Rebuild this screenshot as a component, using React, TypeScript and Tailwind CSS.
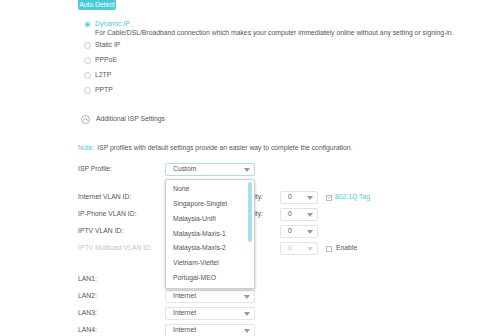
import { useState } from "react";

const TEAL = "#4acbd6";

const ISP_PROFILES = [
  "None",
  "Singapore-Singtel",
  "Malaysia-Unifi",
  "Malaysia-Maxis-1",
  "Malaysia-Maxis-2",
  "Vietnam-Viettel",
  "Portugal-MEO",
];

const CONNECTION_TYPES = ["Static IP", "PPPoE", "L2TP", "PPTP"];

function Arrow({ muted }: { muted?: boolean }) {
  return (
    <svg width="6" height="4" viewBox="0 0 6 4" className="shrink-0">
      <path d="M0 0 L6 0 L3 4 Z" fill={muted ? "#d6d6d6" : "#9a9a9a"} />
    </svg>
  );
}

function Select({
  value,
  wide,
  focused,
  muted,
}: {
  value: string;
  wide?: boolean;
  focused?: boolean;
  muted?: boolean;
}) {
  return (
    <div
      className={`flex h-[13px] items-center justify-between rounded-[2px] border bg-white pl-[7px] pr-[4px] ${
        wide ? "w-[90px]" : "w-[38px]"
      } ${focused ? "border-[#a6e3e8]" : "border-[#e3e3e3]"} ${
        muted ? "text-[#c4c4c4]" : "text-[#555]"
      }`}
    >
      <span>{value}</span>
      <Arrow muted={muted} />
    </div>
  );
}

function Radio({ checked }: { checked?: boolean }) {
  return (
    <span
      className={`flex h-[7px] w-[7px] shrink-0 items-center justify-center rounded-full border ${
        checked ? "border-[#bfeef2] bg-[#bfeef2]" : "border-[#c8c8c8] bg-white"
      }`}
    >
      {checked && <span className="h-[3px] w-[3px] rounded-full bg-[#4acbd6]" />}
    </span>
  );
}

function Check({ checked }: { checked?: boolean }) {
  return (
    <span className="flex h-[6px] w-[6px] shrink-0 items-center justify-center border border-[#bdbdbd] bg-white">
      {checked && (
        <svg width="5" height="5" viewBox="0 0 5 5">
          <path d="M0.5 2.6 L2 4 L4.6 0.8" fill="none" stroke={TEAL} strokeWidth="1" />
        </svg>
      )}
    </span>
  );
}

function VlanRow({
  label,
  priority,
  muted,
  extra,
}: {
  label: string;
  priority?: string;
  muted?: boolean;
  extra?: React.ReactNode;
}) {
  return (
    <div className="flex h-[13px] items-center">
      <div className={`w-[87px] whitespace-nowrap ${muted ? "text-[#c4c4c4]" : ""}`}>{label}</div>
      <Select value="" wide muted={muted} />
      {/* priority label sits mostly under the open dropdown, only its tail shows */}
      <div className="ml-[-3px] mr-[17px] flex w-[11px] justify-end overflow-hidden whitespace-nowrap">
        {priority}
      </div>
      <Select value="0" muted={muted} />
      {extra}
    </div>
  );
}

export default function App() {
  const [open] = useState(true);

  return (
    <div className="relative h-[336px] w-[500px] overflow-hidden bg-white font-['Liberation_Sans',Arial,sans-serif] text-[6.8px] text-[#555]">
      <div className="flex flex-col pl-[78px]">
        <div className="flex h-[10px] w-[38px] items-center justify-center rounded-b-[2px] bg-[#4acbd6] text-[6.8px] leading-none text-white">
          Auto Detect
        </div>

        <div className="ml-[6px] mt-[9px] flex flex-col">
          <div className="flex h-[10px] items-center gap-[4px]">
            <Radio checked />
            <span className="text-[#4acbd6]">Dynamic IP</span>
          </div>
          <div className="flex h-[9px] items-center whitespace-nowrap pl-[11px]">
            For Cable/DSL/Broadband connection which makes your computer immediately online without any setting or signing-in.
          </div>
          {CONNECTION_TYPES.map((t) => (
            <div key={t} className="flex h-[15px] items-center gap-[4px]">
              <Radio />
              <span>{t}</span>
            </div>
          ))}
        </div>

        <div className="ml-[3px] mt-[14px] flex h-[14px] items-center gap-[6px]">
          <svg width="9" height="9" viewBox="0 0 9 9">
            <circle cx="4.5" cy="4.5" r="4" fill="none" stroke="#9a9a9a" strokeWidth="0.8" />
            <path d="M2.6 5.4 L4.5 3.5 L6.4 5.4" fill="none" stroke="#8a8a8a" strokeWidth="0.9" />
          </svg>
          <span>Additional ISP Settings</span>
        </div>

        <div className="mt-[17px] flex h-[10px] items-center whitespace-nowrap">
          <span className="text-[#4acbd6]">Note:</span>
          <span className="ml-[3px]">
            ISP profiles with default settings provide an easier way to complete the configuration.
          </span>
        </div>

        <div className="mt-[10px] flex h-[13px] items-center">
          <div className="w-[87px]">ISP Profile:</div>
          <Select value="Custom" wide focused />
        </div>

        <div className="mt-[15px] flex flex-col gap-[4px]">
          <VlanRow
            label="Internet VLAN ID:"
            priority="Internet VLAN Priority:"
            extra={
              <div className="ml-[8px] flex items-center gap-[3px] text-[#4acbd6]">
                <Check checked />
                <span>802.1Q Tag</span>
              </div>
            }
          />
          <VlanRow label="IP-Phone VLAN ID:" priority="IP-Phone VLAN Priority:" />
          <VlanRow label="IPTV VLAN ID:" />
          <VlanRow
            label="IPTV Multicast VLAN ID:"
            muted
            extra={
              <div className="ml-[8px] flex items-center gap-[4px]">
                <Check />
                <span>Enable</span>
              </div>
            }
          />
        </div>

        <div className="mt-[18px] flex flex-col gap-[4px]">
          {["LAN1:", "LAN2:", "LAN3:", "LAN4:"].map((l, i) => (
            <div key={l} className="flex h-[13px] items-center">
              <div className="w-[87px]">{l}</div>
              {/* LAN1's select is covered by the open dropdown */}
              <Select value={i === 0 ? "" : "Internet"} wide />
            </div>
          ))}
        </div>
      </div>

      {open && (
        <div className="absolute left-[165px] top-[179px] z-10 w-[90px] rounded-[2px] border border-[#cfcfcf] bg-white py-[2px] shadow-[0_1px_3px_rgba(0,0,0,0.25)]">
          <div className="absolute right-[2px] top-[2px] h-[60px] w-[4px] rounded-[2px] bg-[#a6e3e8]" />
          {ISP_PROFILES.map((p) => (
            <div key={p} className="flex h-[14.8px] items-center pl-[7px]">
              {p}
            </div>
          ))}
        </div>
      )}
    </div>
  );
}
